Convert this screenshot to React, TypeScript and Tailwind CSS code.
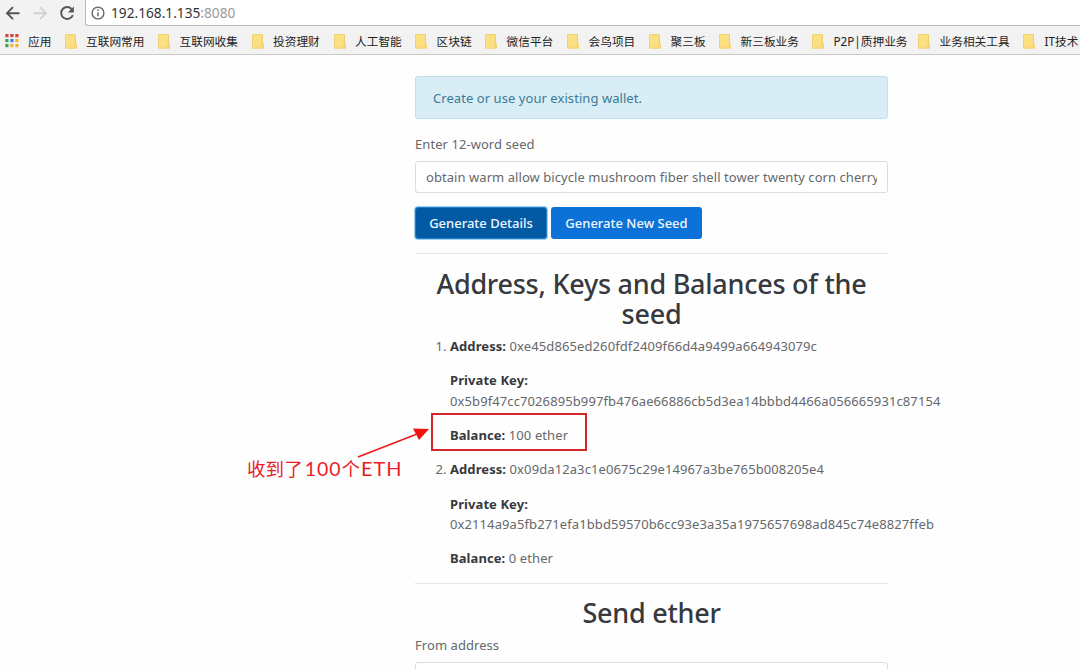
import type { ReactNode } from "react";

const bookmarks: { label: string; width: string }[] = [
  { label: "互联网常用", width: "w-[93.5px]" },
  { label: "互联网收集", width: "w-[93.5px]" },
  { label: "投资理财", width: "w-[82px]" },
  { label: "人工智能", width: "w-[81.5px]" },
  { label: "区块链", width: "w-[70px]" },
  { label: "微信平台", width: "w-[82px]" },
  { label: "会鸟项目", width: "w-[82px]" },
  { label: "聚三板", width: "w-[70px]" },
  { label: "新三板业务", width: "w-[93px]" },
  { label: "P2P|质押业务", width: "w-[106px]" },
  { label: "业务相关工具", width: "w-[105px]" },
  { label: "IT技术", width: "w-[60px]" },
];

const appColors = [
  "#d8453a", "#d8453a", "#d8453a",
  "#3aa35c", "#3f7fe0", "#efb52f",
  "#3aa35c", "#efb52f", "#efb52f",
];

function AppsIcon() {
  return (
    <svg width="14" height="14" viewBox="0 0 14 14" className="shrink-0">
      {appColors.map((color, i) => (
        <rect key={i} x={(i % 3) * 5 + 0.3} y={Math.floor(i / 3) * 5} width="3.2" height="3.2" fill={color} />
      ))}
    </svg>
  );
}

function FolderIcon() {
  return (
    <svg width="12" height="15" viewBox="0 0 12 15" className="shrink-0">
      <path d="M0.5 0.5H10.5V8.5L11.7 10V14.2H0.5Z" fill="#fbdf83" stroke="#efcb62" strokeWidth="0.8" />
      <path d="M10.5 1V9L9.6 14" fill="none" stroke="#f0cd68" strokeWidth="0.8" />
    </svg>
  );
}

function BrowserChrome() {
  return (
    <header className="h-[55px] w-full shrink-0 overflow-hidden border-b border-[#c9c9c9] bg-[#f2f2f2]">
      <div className="flex h-[26px]">
        <div className="flex w-[85px] shrink-0 items-center pl-[5px]">
          <svg width="76" height="24" viewBox="5 0 76 24" fill="none" strokeWidth="1.9">
            <path d="M19.5 12.2H7M13 6.2L7 12.2L13 18.2" stroke="#555" />
            <path d="M33.5 12.2H46M40 6.2L46 12.2L40 18.2" stroke="#d2d2d2" />
            <path d="M72.2 8.7A6 6 0 1 0 72.8 14.1" stroke="#555" />
            <path d="M73.8 5.5V11.5H67.8Z" fill="#555" />
          </svg>
        </div>
        <div className="flex grow items-center rounded-bl-[3px] border-b border-l border-[#b8b8b8] bg-white pl-[5px]">
          <svg width="14" height="14" viewBox="0 0 14 14" fill="none" stroke="#666" strokeWidth="1.4" className="shrink-0">
            <circle cx="7" cy="7" r="5.9" />
            <path d="M7 6.2V10.2M7 3.6V5" />
          </svg>
          <span className="ml-[6px] text-[13.7px] leading-[20px] text-[#333]">
            192.168.1.135<span className="text-[#999]">:8080</span>
          </span>
        </div>
      </div>
      <nav className="flex h-[30px] items-center pl-[5px] font-['Noto_Sans','Noto_Sans_CJK_SC',sans-serif] text-[11.7px] text-[#222]">
        <div className="flex w-[59.5px] shrink-0 items-center gap-[9px]">
          <AppsIcon />
          <span>应用</span>
        </div>
        {bookmarks.map((b) => (
          <div key={b.label} className={`flex shrink-0 items-center gap-[9.5px] whitespace-nowrap ${b.width}`}>
            <FolderIcon />
            <span>{b.label}</span>
          </div>
        ))}
      </nav>
    </header>
  );
}

function Field({ label, value }: { label: string; value: string }) {
  return (
    <p className="mb-[13.8px]">
      <b className="font-bold tracking-[0.08px] text-[#38393d]">{label}</b> {value}
    </p>
  );
}

function Account({ address, secret, balance }: { address: string; secret: string; balance: ReactNode }) {
  return (
    <li>
      <Field label="Address:" value={address} />
      <p className="mb-[13.8px]">
        <b className="font-bold tracking-[0.08px] text-[#38393d]">Private Key:</b>
        <br />
        <span className="whitespace-nowrap">{secret}</span>
      </p>
      {balance}
    </li>
  );
}

function Callout() {
  return (
    <>
      <div className="absolute -top-[12px] -left-[19px] h-[38px] w-[156px] border-2 border-[#d0282c]" />
      <svg width="76" height="34" viewBox="0 0 76 34" className="absolute -top-[1px] -left-[94px]">
        <path d="M2 33L61 10" stroke="#ee1c1c" strokeWidth="1.7" />
        <path d="M57 4.5L73 5L63 16Z" fill="#f01010" />
      </svg>
      <span className="absolute top-[30px] -left-[203px] flex items-baseline font-['Lato','Noto_Sans_CJK_SC',sans-serif] text-[18.5px] leading-[26px] whitespace-nowrap text-[#ec1c24]">
        <span>收到了</span>
        <span className="ml-[2px] text-[19.5px] tracking-[0.9px]">100</span>
        <span>个</span>
        <span className="ml-[1px] text-[20px] tracking-[0.9px]">ETH</span>
      </span>
    </>
  );
}

export default function App() {
  return (
    <div className="flex h-[669px] w-[1080px] flex-col overflow-hidden bg-[#fefefe] font-['Noto_Sans',sans-serif] text-[13px] leading-[20.5px] text-[#66686b]">
      <BrowserChrome />
      <main className="ml-[415px] w-[473px] pt-[21px] tracking-[0.06px]">
        <div className="flex h-[43px] items-center rounded-[3px] border border-[#bce3ec] bg-[#d9edf7] px-[17px] pt-[2px] text-[#397b92]">
          Create or use your existing wallet.
        </div>
        <label className="mt-[15px] block h-[20px]">Enter 12-word seed</label>
        <div className="mt-[7px] flex h-[32px] items-center rounded-[3px] border border-[#dfdbe2] bg-white px-[10px]">
          <span className="overflow-hidden whitespace-nowrap">
            obtain warm allow bicycle mushroom fiber shell tower twenty corn cherry
          </span>
        </div>
        <div className="mt-[14px] flex gap-[4px] font-medium tracking-normal text-[#f0f7ff]">
          <button className="h-[32px] w-[132px] rounded-[3px] border border-[#1b80c9] bg-[#025aa5] pt-px ring-1 ring-[#a3d0f0]">Generate Details</button>
          <button className="h-[32px] w-[151px] rounded-[3px] bg-[#0c72d8] pt-px">Generate New Seed</button>
        </div>
        <hr className="mt-[14px] border-[#e6e4e8]" />
        <h2 className="mt-[15px] text-center text-[27px] leading-[30px] font-medium tracking-[-0.25px] text-[#36393e]">
          Address, Keys and Balances of the seed
        </h2>
        <ol className="mt-[7px] list-decimal pl-[35px] tracking-[0.1px]">
          <Account
            address="0xe45d865ed260fdf2409f66d4a9499a664943079c"
            secret="0x5b9f47cc7026895b997fb476ae66886cb5d3ea14bbbd4466a056665931c87154"
            balance={
              <div className="relative">
                <Field label="Balance:" value="100 ether" />
                <Callout />
              </div>
            }
          />
          <Account
            address="0x09da12a3c1e0675c29e14967a3be765b008205e4"
            secret="0x2114a9a5fb271efa1bbd59570b6cc93e3a35a1975657698ad845c74e8827ffeb"
            balance={<Field label="Balance:" value="0 ether" />}
          />
        </ol>
        <hr className="border-[#e6e4e8]" />
        <h2 className="mt-[14px] text-center text-[27px] leading-[30px] font-medium tracking-[-0.25px] text-[#36393e]">Send ether</h2>
        <label className="mt-[7px] block h-[20px]">From address</label>
        <div className="mt-[7px] h-[32px] rounded-[3px] border border-[#dfdbe2] bg-white" />
      </main>
    </div>
  );
}
